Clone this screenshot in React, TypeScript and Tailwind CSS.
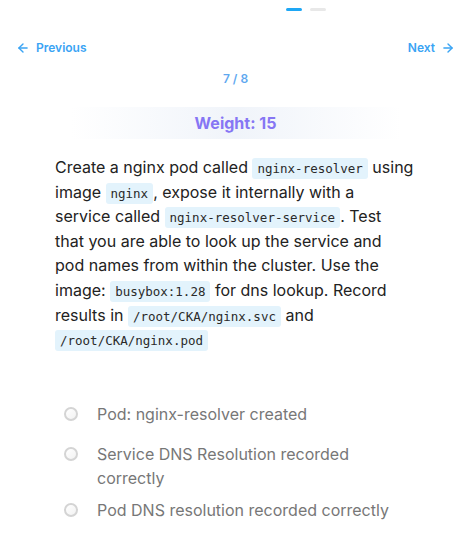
import { ArrowLeft, ArrowRight } from "lucide-react";

// Exam question card — one task with its checklist of graded items.

function Code({ children }: { children: string }) {
  return (
    <code className="rounded-[3px] bg-[#e3f3fc] px-[5px] py-[3px] font-['DejaVu_Sans_Mono',monospace] text-[12.5px] leading-[14px] text-[#2a2a2a]">
      {children}
    </code>
  );
}

const checks = ["Pod: nginx-resolver created", "Service DNS Resolution recorded correctly", "Pod DNS resolution recorded correctly"];

export default function App() {
  return (
    <main className="min-h-[535px] w-full bg-white font-['Inter',sans-serif]">
      <div className="flex gap-2 pl-[286px] pt-[8px]">
        <span className="h-[3px] w-4 rounded-full bg-[#1ea7f5]" />
        <span className="h-[3px] w-4 rounded-full bg-[#e8e8e8]" />
      </div>

      <nav className="mt-[28px] flex items-center justify-between px-[16px] text-[12px] font-semibold text-[#3aa4f4]">
        <button className="flex items-center gap-[6px]">
          <ArrowLeft size={14} strokeWidth={2.4} />
          Previous
        </button>
        <button className="flex items-center gap-[6px]">
          Next
          <ArrowRight size={14} strokeWidth={2.4} />
        </button>
      </nav>

      <p className="mt-[13px] text-center text-[12px] font-semibold text-[#5ea8f0]">7 / 8</p>

      <div className="mx-auto mt-[19px] flex h-[32px] w-[330px] items-center justify-center bg-gradient-to-r from-transparent via-[#f0f4fa] to-transparent">
        <h2 className="text-[16px] font-bold text-[#8676f4]">Weight: 15</h2>
      </div>

      {/* line breaks pinned to the reference wrap */}
      <p className="ml-[55px] mr-[40px] mt-[16px] text-[16px] leading-[24.6px] text-[#222]">
        Create a nginx pod called <Code>nginx-resolver</Code> using
        <br />
        image <Code>nginx</Code>, expose it internally with a
        <br />
        service called <Code>nginx-resolver-service</Code>. Test
        <br />
        that you are able to look up the service and
        <br />
        pod names from within the cluster. Use the
        <br />
        image: <Code>busybox:1.28</Code> for dns lookup. Record
        <br />
        results in <Code>/root/CKA/nginx.svc</Code> and
        <br />
        <Code>/root/CKA/nginx.pod</Code>
      </p>

      <ul className="mt-[50px] space-y-[8px] pl-[64px] pr-[70px]">
        {checks.map((c, i) => (
          <li key={c} className={`flex items-start gap-[19px] text-[16px] leading-[24px] text-[#777] ${i === 1 ? "pt-[8px]" : ""}`}>
            <span className="mt-[5px] h-[14px] w-[14px] shrink-0 rounded-full border-[2px] border-[#d4d4d4] bg-gradient-to-br from-white to-[#f2f2f2]" />
            <span>{c}</span>
          </li>
        ))}
      </ul>
    </main>
  );
}
